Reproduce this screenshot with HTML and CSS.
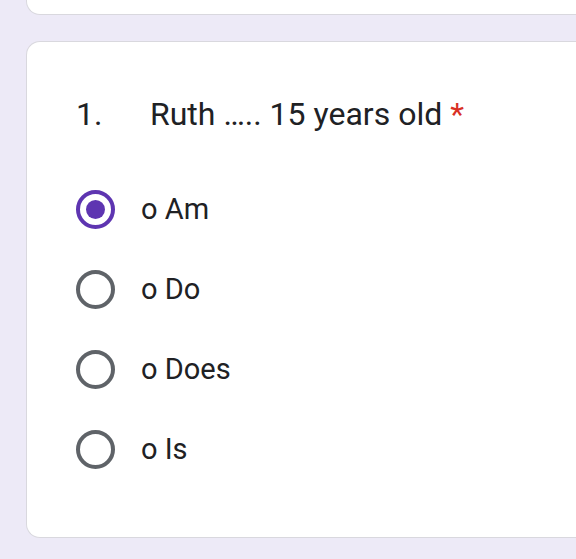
FILE: index.html
```html
<!DOCTYPE html>
<html>
<head>
<meta charset="utf-8">
<link rel="stylesheet" href="styles.css">
</head>
<body>
<div class="page">
  <div class="card card-prev"></div>
  <div class="card card-question">
    <div class="question">
      <span class="num">1.</span>
      <span class="qtext">Ruth ….. 15 years old <span class="req">*</span></span>
    </div>
    <div class="options">
      <label class="option">
        <span class="radio checked"><span class="dot"></span></span>
        <span class="label">o Am</span>
      </label>
      <label class="option">
        <span class="radio"></span>
        <span class="label">o Do</span>
      </label>
      <label class="option">
        <span class="radio"></span>
        <span class="label">o Does</span>
      </label>
      <label class="option">
        <span class="radio"></span>
        <span class="label">o Is</span>
      </label>
    </div>
  </div>
</div>
</body>
</html>
```
FILE: styles.css
```css
html, body {
  margin: 0;
  padding: 0;
  background: #edeaf7;
  overflow: hidden;
  height: 559px;
  font-family: Roboto, "Liberation Sans", sans-serif;
  color: #202124;
}
.page {
  padding-left: 26px;
}
.card {
  background: #fff;
  border: 1px solid #d9d8de;
  border-right: none;
  border-radius: 14px 0 0 14px;
}
.card-prev {
  height: 14px;
  border-top: none;
  border-radius: 0 0 0 14px;
}
.card-question {
  margin-top: 26px;
  height: 495px;
  padding-left: 49px;
}
.question {
  display: flex;
  align-items: center;
  margin-top: 52px;
  height: 40px;
  font-size: 32px;
  line-height: 40px;
}
.num {
  width: 74px;
}
.req {
  color: #d93025;
}
.options {
  margin-top: 35px;
  display: flex;
  flex-direction: column;
}
.option {
  display: flex;
  align-items: center;
  height: 80px;
}
.radio {
  width: 31px;
  height: 31px;
  border: 4px solid #5f6368;
  border-radius: 50%;
  display: flex;
  align-items: center;
  justify-content: center;
  flex-shrink: 0;
}
.radio.checked {
  border-color: #5e35b1;
}
.dot {
  width: 19px;
  height: 19px;
  border-radius: 50%;
  background: #5e35b1;
}
.label {
  margin-left: 26px;
  font-size: 29px;
}
```
